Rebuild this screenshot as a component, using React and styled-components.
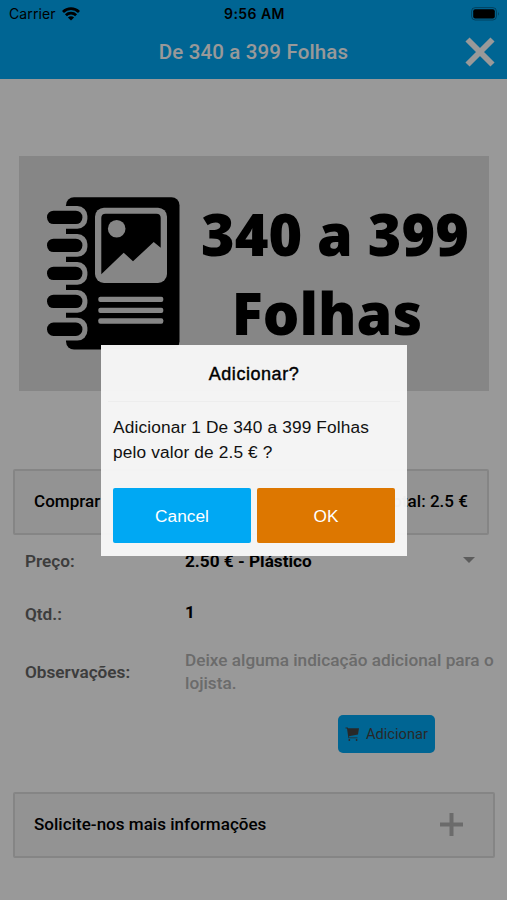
import React, { useState } from "react"
import styled, { createGlobalStyle } from "styled-components"

const GlobalStyle = createGlobalStyle`
  * {
    box-sizing: border-box;
  }
  body {
    margin: 0;
    background: #999;
    overflow: hidden;
  }
`

const Page = styled.div`
  position: relative;
  display: flex;
  flex-direction: column;
  width: 507px;
  height: 900px;
  background: #fff;
  font-family: Roboto, sans-serif;
  color: #000;
`

const Header = styled.header`
  flex: none;
  height: 79px;
  background: #00a8f5;
`

const StatusBar = styled.div`
  display: grid;
  grid-template-columns: 1fr auto 1fr;
  align-items: center;
  height: 27px;
  padding: 0 7px 0 9px;
  font-family: Inter, sans-serif;
  font-size: 14px;
`

const Carrier = styled.div`
  display: flex;
  align-items: center;
  gap: 6px;
  letter-spacing: 0.1px;
`

const Clock = styled.div`
  font-weight: 600;
  letter-spacing: 0.45px;
`

const Battery = styled.div`
  display: flex;
  justify-content: flex-end;
`

const TitleBar = styled.div`
  display: grid;
  grid-template-columns: 1fr auto 1fr;
  align-items: center;
  height: 50px;
  padding: 0 12px;
`

const Title = styled.h1`
  grid-column: 2;
  margin: 0;
  font-size: 20.5px;
  font-weight: 500;
  letter-spacing: 0.15px;
  color: #fff;
`

const CloseButton = styled.button`
  justify-self: end;
  display: flex;
  padding: 0;
  border: none;
  background: none;
`

const Content = styled.main`
  display: flex;
  flex-direction: column;
  padding-top: 77px;
`

const Banner = styled.div`
  display: flex;
  width: 470px;
  height: 235px;
  margin-left: 19px;
  padding: 40px 0 0 27px;
  background: #dfdfdf;
`

const BannerText = styled.div`
  display: flex;
  flex-direction: column;
  align-items: center;
  width: 282px;
  margin: -1px 0 0 14px;
  font-family: "Open Sans", sans-serif;
  font-size: 57.5px;
  font-weight: 800;
  line-height: 79px;
  white-space: nowrap;
`

const BannerUnit = styled.span`
  margin-right: 16px;
`

const Panel = styled.section`
  display: flex;
  align-items: center;
  justify-content: space-between;
  width: ${({ width }) => width}px;
  height: 66px;
  margin: ${({ top }) => top}px 0 0 13px;
  padding: 0 ${({ right }) => right}px 2px 19px;
  border: 2px solid #dedede;
  border-radius: 2px;
  background: #f6f6f6;
  font-size: 17px;
  font-weight: 500;
  letter-spacing: 0.03px;
`

const Row = styled.div`
  display: grid;
  grid-template-columns: 160px 1fr;
  align-items: center;
  height: ${({ height }) => height}px;
  padding: 0 0 2px 25px;
  font-size: 17.2px;
`

const Label = styled.label`
  font-weight: 600;
  color: #666;
`

const Value = styled.div`
  display: flex;
  justify-content: space-between;
  align-items: center;
  padding-right: 32px;
  padding-bottom: ${({ lift }) => lift || 0}px;
  font-weight: 700;
`

const Hint = styled.div`
  font-weight: 500;
  line-height: 23px;
  color: #b2b2b2;
`

const Caret = styled.i`
  margin-top: -2px;
  border: 6px solid transparent;
  border-top-color: #999;
  border-bottom: none;
`

const AddButton = styled.button`
  display: flex;
  align-items: center;
  justify-content: center;
  gap: 6px;
  width: 97px;
  height: 38px;
  margin: 10px 0 0 338px;
  padding: 0;
  border: none;
  border-radius: 5px;
  background: #00a8f5;
  font-family: Roboto, sans-serif;
  font-size: 14.7px;
  color: #444;
`

const Overlay = styled.div`
  position: absolute;
  inset: 0;
  display: flex;
  align-items: flex-start;
  justify-content: center;
  padding: 345px 0 0 1px;
  background: rgba(0, 0, 0, 0.4);
`

const Dialog = styled.div`
  width: 306px;
  height: 211px;
  padding: 0 7px;
  background: rgba(247, 247, 247, 0.97);
  font-family: "Liberation Sans", Arial, sans-serif;
`

const DialogTitle = styled.h2`
  height: 57px;
  margin: 0;
  border-bottom: 1px solid #ededed;
  font-size: 18px;
  font-weight: 400;
  line-height: 58px;
  text-align: center;
  letter-spacing: 0.55px;
  -webkit-text-stroke: 0.4px #000;
`

const DialogText = styled.p`
  height: 86px;
  margin: 0;
  padding: 13px 5px 0;
  font-size: 17.3px;
  line-height: 25px;
  letter-spacing: 0.14px;
  color: #111;
`

const DialogButtons = styled.div`
  display: grid;
  grid-template-columns: 1fr 1fr;
  gap: 6px;
  padding: 0 5px;
`

const DialogButton = styled.button`
  height: 55px;
  padding: 2px 0 0;
  border: none;
  border-radius: 2px;
  background: ${({ color }) => color};
  font-family: inherit;
  font-size: 17.3px;
  color: #fff;
`

const WifiIcon = () => (
  <svg width="18" height="14" viewBox="0 0 18 14" fill="none" stroke="#000" strokeWidth="2.8">
    <path d="M1 5 A11.4 11.4 0 0 1 17 5" />
    <path d="M3.9 8.3 A7.3 7.3 0 0 1 14.1 8.3" />
    <path d="M9 13.6 L5.9 10.5 A4.4 4.4 0 0 1 12.1 10.5 Z" fill="#000" stroke="none" />
  </svg>
)

const BatteryIcon = () => (
  <svg width="29" height="14" viewBox="0 0 29 14">
    <rect x="0.6" y="0.6" width="24.8" height="12.4" rx="3.6" fill="none" stroke="#000" strokeOpacity="0.35" />
    <rect x="2.2" y="2.2" width="21.6" height="9.2" rx="2" />
    <path d="M27 4.8 Q28.6 6.8 27 8.8 Z" fillOpacity="0.4" />
  </svg>
)

const CloseIcon = () => (
  <svg width="30" height="30" viewBox="0 0 30 30" stroke="#fff" strokeWidth="5.8">
    <path d="M2.5 2.5 L27.5 27.5 M27.5 2.5 L2.5 27.5" />
  </svg>
)

const CartIcon = () => (
  <svg width="15" height="15" viewBox="0 0 15 15" fill="#444">
    <path d="M0.5 0.5 H2.8 L3.1 1.2 H14 L13 7.6 L4 9.2 L4.2 10.4 H12.5 V11.2 H3.4 L2 1.6 H0.5 Z" />
    <circle cx="4.3" cy="13" r="0.9" />
    <circle cx="11.6" cy="13" r="0.9" />
  </svg>
)

const PlusIcon = () => (
  <svg width="23" height="23" viewBox="0 0 23 23" stroke="#b2b2b2" strokeWidth="4">
    <path d="M11.5 0 V23 M0 11.5 H23" />
  </svg>
)

const rings = [14.7, 42.7, 70.7, 98.7, 126.5]

const NotebookIcon = () => (
  <svg width="134" height="154" viewBox="0 0 134 154">
    <rect x="20" y="1.2" width="113.5" height="152.3" rx="8" />
    {rings.map((y) => (
      <g key={y}>
        <rect x="10" y={y - 4.7} width="31.4" height="22.8" rx="10" fill="#dfdfdf" />
        <rect x="1" y={y} width="35.4" height="13.4" rx="6.5" />
      </g>
    ))}
    <rect x="49" y="11.7" width="72" height="75.3" rx="9" fill="#dfdfdf" />
    <path d="M55.3 78.3 V22 Q55.3 17.7 59.6 17.7 H110.4 Q114.7 17.7 114.7 22 V51.7 L107.7 46 L87 65.3 L77.7 56.7 Z" />
    <circle cx="70.7" cy="32.7" r="8.8" fill="#dfdfdf" />
    {[100.7, 111.7, 122.3].map((y) => (
      <rect key={y} x="52.3" y={y} width="65" height="5.4" rx="2" fill="#dfdfdf" />
    ))}
  </svg>
)

export default function App() {
  const [open, setOpen] = useState(true)

  return (
    <Page>
      <GlobalStyle />
      <Header>
        <StatusBar>
          <Carrier>Carrier <WifiIcon /></Carrier>
          <Clock>9:56 AM</Clock>
          <Battery><BatteryIcon /></Battery>
        </StatusBar>
        <TitleBar>
          <Title>De 340 a 399 Folhas</Title>
          <CloseButton><CloseIcon /></CloseButton>
        </TitleBar>
      </Header>

      <Content>
        <Banner>
          <NotebookIcon />
          <BannerText>
            <span>340 a 399</span>
            <BannerUnit>Folhas</BannerUnit>
          </BannerText>
        </Banner>

        <Panel width={476} top={78} right={19}>
          <span>Comprar</span>
          <span>Total: 2.5 €</span>
        </Panel>

        <Row height={53}>
          <Label>Preço:</Label>
          <Value>2.50 € - Plástico <Caret /></Value>
        </Row>
        <Row height={53}>
          <Label>Qtd.:</Label>
          <Value lift={3}>1</Value>
        </Row>
        <Row height={64}>
          <Label>Observações:</Label>
          <Hint>Deixe alguma indicação adicional para o lojista.</Hint>
        </Row>

        <AddButton onClick={() => setOpen(true)}><CartIcon /> Adicionar</AddButton>

        <Panel width={482} top={39} right={30}>
          <span>Solicite-nos mais informações</span>
          <PlusIcon />
        </Panel>
      </Content>

      {open && (
        <Overlay>
          <Dialog>
            <DialogTitle>Adicionar?</DialogTitle>
            <DialogText>Adicionar 1 De 340 a 399 Folhas pelo valor de 2.5 € ?</DialogText>
            <DialogButtons>
              <DialogButton color="#00a8f3" onClick={() => setOpen(false)}>Cancel</DialogButton>
              <DialogButton color="#dd7700" onClick={() => setOpen(false)}>OK</DialogButton>
            </DialogButtons>
          </Dialog>
        </Overlay>
      )}
    </Page>
  )
}
